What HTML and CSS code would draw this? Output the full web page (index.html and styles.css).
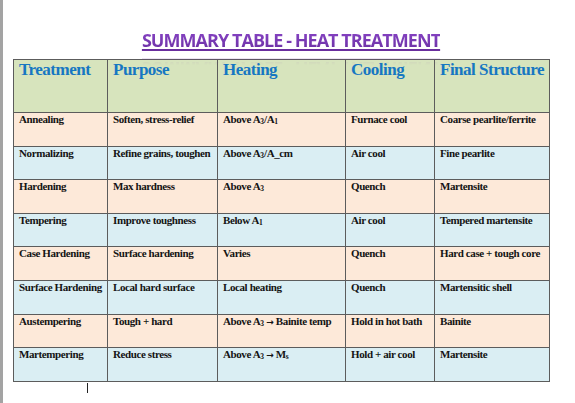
FILE: index.html
```html
<!DOCTYPE html>
<html>
<head>
<meta charset="utf-8">
<link rel="stylesheet" href="styles.css">
</head>
<body>
<div class="page">
  <h1 class="title"><span class="title-text">SUMMARY TABLE - HEAT TREATMENT</span></h1>
  <table class="summary">
    <colgroup>
      <col class="c1"><col class="c2"><col class="c3"><col class="c4"><col class="c5">
    </colgroup>
    <tr class="head">
      <th>Treatment</th><th>Purpose</th><th>Heating</th><th>Cooling</th><th>Final Structure</th>
    </tr>
    <tr class="peach">
      <td>Annealing</td><td>Soften, stress-relief</td><td>Above A<sub>3</sub>/A<sub>1</sub></td><td>Furnace cool</td><td>Coarse pearlite/ferrite</td>
    </tr>
    <tr class="blue">
      <td>Normalizing</td><td>Refine grains, toughen</td><td>Above A<sub>3</sub>/A_cm</td><td>Air cool</td><td>Fine pearlite</td>
    </tr>
    <tr class="peach">
      <td>Hardening</td><td>Max hardness</td><td>Above A<sub>3</sub></td><td>Quench</td><td>Martensite</td>
    </tr>
    <tr class="blue">
      <td>Tempering</td><td>Improve toughness</td><td>Below A<sub>1</sub></td><td>Air cool</td><td>Tempered martensite</td>
    </tr>
    <tr class="peach">
      <td>Case Hardening</td><td>Surface hardening</td><td>Varies</td><td>Quench</td><td>Hard case + tough core</td>
    </tr>
    <tr class="blue">
      <td>Surface Hardening</td><td>Local hard surface</td><td>Local heating</td><td>Quench</td><td>Martensitic shell</td>
    </tr>
    <tr class="peach">
      <td>Austempering</td><td>Tough + hard</td><td>Above A<sub>3</sub> <span class="arrow">→</span> Bainite temp</td><td>Hold in hot bath</td><td>Bainite</td>
    </tr>
    <tr class="blue">
      <td>Martempering</td><td>Reduce stress</td><td>Above A<sub>3</sub> <span class="arrow">→</span> M<sub>s</sub></td><td>Hold + air cool</td><td>Martensite</td>
    </tr>
  </table>
  <div class="cursor"></div>
</div>
</body>
</html>
```

FILE: styles.css
```css
html, body {
  margin: 0;
  padding: 0;
  background: #ffffff;
}

body {
  border-left: 3px solid #a3a3a3;
  min-height: 403px;
  box-sizing: border-box;
}

.page {
  padding: 29px 0 0 10px;
}

.title {
  margin: 0;
  height: 29.5px;
  display: flex;
  justify-content: center;
  width: 556px;
  font-family: "Open Sans", "Liberation Sans", sans-serif;
  font-weight: 700;
  font-size: 18px;
  line-height: 22px;
  letter-spacing: -0.95px;
}

.title-text {
  color: #6d2fa3;
  background: linear-gradient(#8a45c8, #5e2894);
  -webkit-background-clip: text;
  background-clip: text;
  -webkit-text-fill-color: transparent;
  text-decoration: underline;
  text-decoration-color: #6a2e9e;
  text-decoration-thickness: 1.5px;
  text-underline-offset: 2px;
  -webkit-box-reflect: below -9px linear-gradient(rgba(0,0,0,0) 50%, rgba(0,0,0,0.3));
}

.summary {
  border-collapse: collapse;
  width: 536px;
  table-layout: fixed;
  font-family: "Liberation Serif", "Times New Roman", serif;
}

.c1 { width: 94px; }
.c2 { width: 110px; }
.c3 { width: 128px; }
.c4 { width: 89px; }
.c5 { width: 115px; }

.summary th,
.summary td {
  border: 1px solid #5c5c5c;
  vertical-align: top;
  text-align: left;
  padding: 0 0 0 5px;
  white-space: nowrap;
  overflow: hidden;
}

.summary th {
  font-size: 17px;
  letter-spacing: -0.5px;
  font-weight: 700;
  color: #1677c2;
  line-height: 19px;
}

.summary td {
  font-size: 11px;
  letter-spacing: -0.4px;
  font-weight: 700;
  color: #141414;
  line-height: 12px;
}

.head { height: 53.5px; background: #d7e4bd; }
.peach { height: 33.6px; background: #fde9d9; }
.blue { height: 33.6px; background: #daeef3; }

.summary sub {
  font-size: 7.5px;
  line-height: 0;
  vertical-align: -1px;
  letter-spacing: 0;
}

.arrow {
  font-family: "DejaVu Sans", sans-serif;
  font-size: 9px;
  font-weight: 700;
}

.cursor {
  width: 1px;
  height: 10px;
  margin: 1px 0 0 74px;
  background: #222;
}
```
